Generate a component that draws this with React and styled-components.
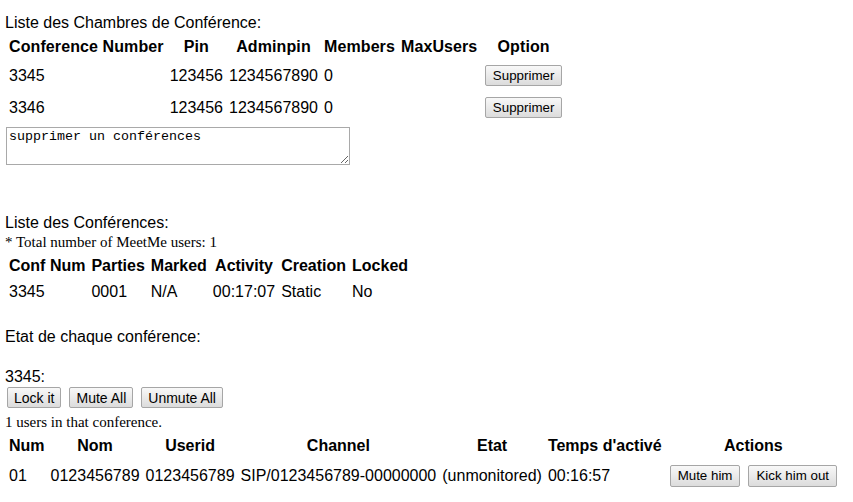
import React from "react";
import styled, { createGlobalStyle } from "styled-components";

const Global = createGlobalStyle`
  html, body { margin: 0; padding: 0; background: #fff; }
  body {
    font-family: "Liberation Sans", Arial, sans-serif;
    font-size: 16px;
    color: #000;
  }
`;

const Page = styled.div`
  padding: 14px 0 10px 5px;
`;

const Heading = styled.div`
  margin-top: ${(p) => p.$gap || 0}px;
  line-height: normal;
`;

const SerifNote = styled.div`
  font-family: "Liberation Serif", "Times New Roman", serif;
  font-size: 15px;
  line-height: normal;
  margin-top: ${(p) => p.$gap || 0}px;
`;

const Table = styled.table`
  border-collapse: separate;
  border-spacing: 2px;
  margin-top: ${(p) => p.$gap || 0}px;
  font-size: 16px;
`;

const Th = styled.th`
  font-weight: bold;
  text-align: center;
  padding: 3px 2px;
  letter-spacing: ${(p) => (p.$wide ? 0.1 : 0)}px;
  white-space: nowrap;
`;

const Td = styled.td`
  padding: 3px 2px;
  text-align: left;
  vertical-align: middle;
  white-space: nowrap;
`;

const Actions = styled.div`
  display: flex;
  align-items: center;
  gap: 4px;
  height: ${(p) => p.$h}px;
`;

const Btn = styled.button`
  font-family: "Liberation Sans", Arial, sans-serif;
  font-size: ${(p) => p.$size || 13.333}px;
  line-height: normal;
  color: #000;
  height: ${(p) => p.$height || 21}px;
  padding: 0 ${(p) => p.$pad || 7}px;
  margin: 0 2px;
  border: 1px solid #a6a6a6;
  border-radius: 2px;
  background: linear-gradient(#f8f8f8, #dcdcdc);
  cursor: default;
  white-space: nowrap;
`;

const Note = styled.textarea`
  display: block;
  box-sizing: border-box;
  width: 344px;
  height: 38px;
  margin: 2.5px 0 0 1px;
  padding: 1px 2px;
  border: 1px solid #a9a9a9;
  font-family: "Liberation Mono", "Courier New", monospace;
  font-size: 13.333px;
  line-height: normal;
  color: #000;
  background: #fff;
  resize: both;
`;

const ButtonRow = styled.div`
  display: flex;
  align-items: center;
  gap: 4px;
  margin-top: 1px;
`;

const rooms = [
  { num: "3345", pin: "123456", admin: "1234567890", members: "0", max: "" },
  { num: "3346", pin: "123456", admin: "1234567890", members: "0", max: "" },
];

export default function App() {
  return (
    <>
      <Global />
      <Page>
        <Heading>Liste des Chambres de Conférence:</Heading>
        <Table $gap={1}>
          <thead>
            <tr>
              <Th $wide>Conference Number</Th>
              <Th $wide>Pin</Th>
              <Th $wide>Adminpin</Th>
              <Th $wide>Members</Th>
              <Th $wide>MaxUsers</Th>
              <Th $wide>Option</Th>
            </tr>
          </thead>
          <tbody>
            {rooms.map((r) => (
              <tr key={r.num}>
                <Td>{r.num}</Td>
                <Td>{r.pin}</Td>
                <Td>{r.admin}</Td>
                <Td>{r.members}</Td>
                <Td>{r.max}</Td>
                <Td>
                  <Actions $h={23.7}>
                    <Btn $pad={6.5}>Supprimer</Btn>
                  </Actions>
                </Td>
              </tr>
            ))}
          </tbody>
        </Table>
        <Note defaultValue="supprimer un conférences" />

        <Heading $gap={49}>Liste des Conférences:</Heading>
        <SerifNote $gap={2.5}>* Total number of MeetMe users: 1</SerifNote>
        <Table $gap={0.7}>
          <thead>
            <tr>
              <Th>Conf Num</Th>
              <Th>Parties</Th>
              <Th>Marked</Th>
              <Th>Activity</Th>
              <Th>Creation</Th>
              <Th>Locked</Th>
            </tr>
          </thead>
          <tbody>
            <tr>
              <Td>3345</Td>
              <Td>0001</Td>
              <Td>N/A</Td>
              <Td>00:17:07</Td>
              <Td>Static</Td>
              <Td>No</Td>
            </tr>
          </tbody>
        </Table>

        <Heading $gap={21.7}>Etat de chaque conférence:</Heading>
        <Heading $gap={22.3}>3345:</Heading>
        <ButtonRow>
          <Btn $size={14} $pad={6}>Lock it</Btn>
          <Btn $size={14} $pad={6}>Mute All</Btn>
          <Btn $size={14} $pad={6}>Unmute All</Btn>
        </ButtonRow>
        <SerifNote $gap={6}>1 users in that conference.</SerifNote>
        <Table $gap={1}>
          <thead>
            <tr>
              <Th>Num</Th>
              <Th>Nom</Th>
              <Th>Userid</Th>
              <Th>Channel</Th>
              <Th>Etat</Th>
              <Th>Temps d'activé</Th>
              <Th>Actions</Th>
            </tr>
          </thead>
          <tbody>
            <tr>
              <Td>01</Td>
              <Td>0123456789</Td>
              <Td>0123456789</Td>
              <Td>SIP/0123456789-00000000</Td>
              <Td>(unmonitored)</Td>
              <Td>00:16:57</Td>
              <Td>
                <Actions $h={25.5}>
                  <Btn $height={22}>Mute him</Btn>
                  <Btn $height={22}>Kick him out</Btn>
                </Actions>
              </Td>
            </tr>
          </tbody>
        </Table>
      </Page>
    </>
  );
}
